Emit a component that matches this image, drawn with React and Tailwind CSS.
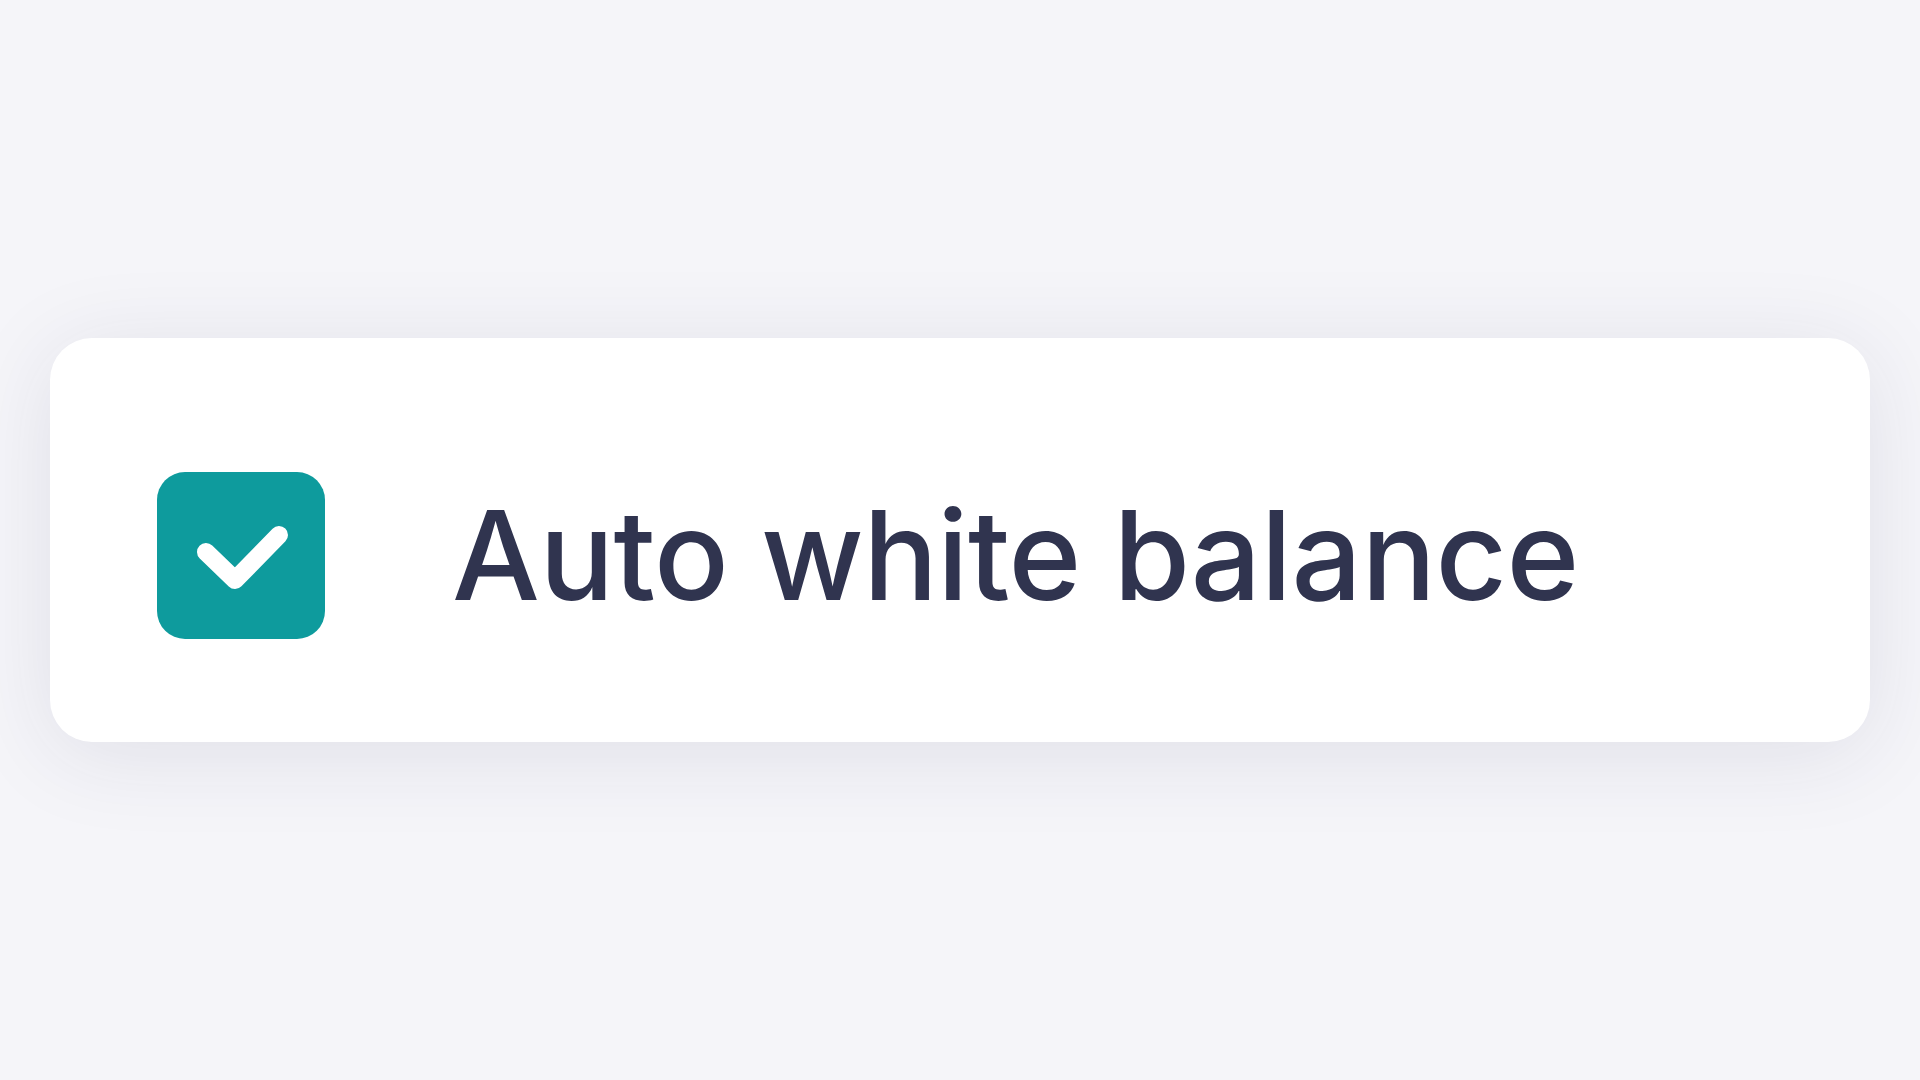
export default function App() {
  return (
    <div className="min-h-screen w-full bg-[#f5f5f9] pt-[338px] pl-[50px]" style={{ fontFamily: 'Inter, "Noto Sans", sans-serif' }}>
      <label className="flex h-[404px] w-[1820px] items-center rounded-[42px] bg-white pl-[107px] pt-[30px] shadow-[0_12px_90px_rgba(40,40,80,0.1)]">
        <span className="flex h-[167px] w-[168px] shrink-0 items-center justify-center rounded-[28px] bg-[#0e9b9d]">
          <svg width="168" height="167" viewBox="0 0 168 167" fill="none">
            <path d="M49 80 L78 108 L122 63" stroke="white" strokeWidth="18" strokeLinecap="round" strokeLinejoin="round" />
          </svg>
        </span>
        <span className="ml-[127px] text-[124px] leading-none font-medium tracking-[-0.5px] text-[#30344f]">
          Auto white balance
        </span>
      </label>
    </div>
  );
}
